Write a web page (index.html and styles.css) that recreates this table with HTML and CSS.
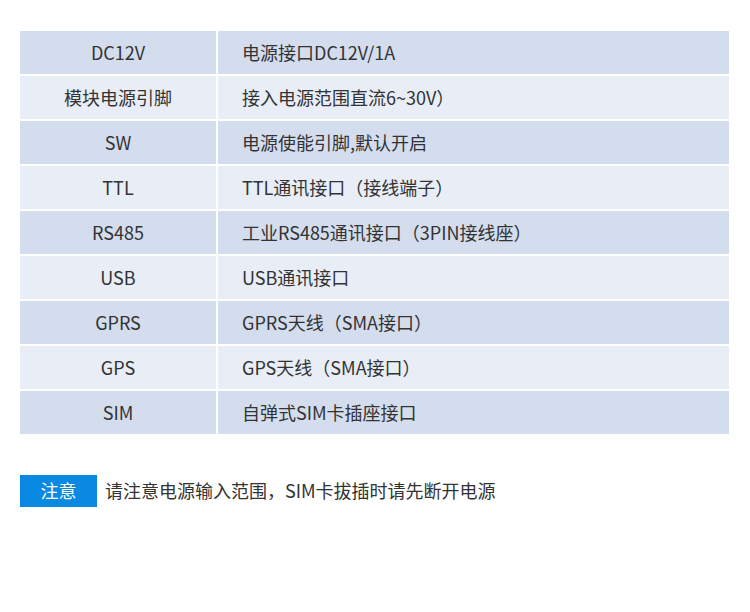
FILE: index.html
```html
<!DOCTYPE html>
<html lang="zh-CN">
<head>
<meta charset="utf-8">
<title>接口说明</title>
<link rel="stylesheet" href="styles.css">
</head>
<body>
<div class="page">
  <div class="spec">
    <div class="row odd"><div class="name">DC12V</div><div class="desc">电源接口DC12V/1A</div></div>
    <div class="row even"><div class="name">模块电源引脚</div><div class="desc">接入电源范围直流6~30V）</div></div>
    <div class="row odd"><div class="name">SW</div><div class="desc">电源使能引脚,默认开启</div></div>
    <div class="row even"><div class="name">TTL</div><div class="desc">TTL通讯接口（接线端子）</div></div>
    <div class="row odd"><div class="name">RS485</div><div class="desc">工业RS485通讯接口（3PIN接线座）</div></div>
    <div class="row even"><div class="name">USB</div><div class="desc">USB通讯接口</div></div>
    <div class="row odd"><div class="name">GPRS</div><div class="desc">GPRS天线（SMA接口）</div></div>
    <div class="row even"><div class="name">GPS</div><div class="desc">GPS天线（SMA接口）</div></div>
    <div class="row odd"><div class="name">SIM</div><div class="desc">自弹式SIM卡插座接口</div></div>
  </div>
  <div class="note">
    <div class="note-label">注意</div>
    <div class="note-text">请注意电源输入范围，SIM卡拔插时请先断开电源</div>
  </div>
</div>
</body>
</html>
```

FILE: styles.css
```css
html, body {
  margin: 0;
  padding: 0;
  background: #ffffff;
}

.page {
  padding: 31px 21px 0 20px;
  font-family: "Noto Sans CJK SC", "Noto Sans", sans-serif;
  color: #333333;
}

.spec {
  display: flex;
  flex-direction: column;
  gap: 2px;
  width: 709px;
}

.row {
  display: grid;
  grid-template-columns: 196px 511px;
  column-gap: 2px;
  height: 43px;
}

.row > div {
  display: flex;
  align-items: center;
  font-size: 18px;
  line-height: 1;
  padding-bottom: 2px;
  box-sizing: border-box;
}

.odd > div {
  background: #d3ddee;
}

.even > div {
  background: #e8edf6;
}

.name {
  justify-content: center;
}

.desc {
  padding-left: 24px;
}

.note {
  display: flex;
  align-items: center;
  gap: 8px;
  margin-top: 41px;
}

.note-label {
  width: 77px;
  height: 32px;
  padding-bottom: 2px;
  box-sizing: border-box;
  background: #0a89e2;
  color: #ffffff;
  font-size: 18px;
  line-height: 1;
  display: flex;
  align-items: center;
  justify-content: center;
}

.note-text {
  font-size: 18px;
  line-height: 1;
  padding-bottom: 2px;
  color: #333333;
}
```
